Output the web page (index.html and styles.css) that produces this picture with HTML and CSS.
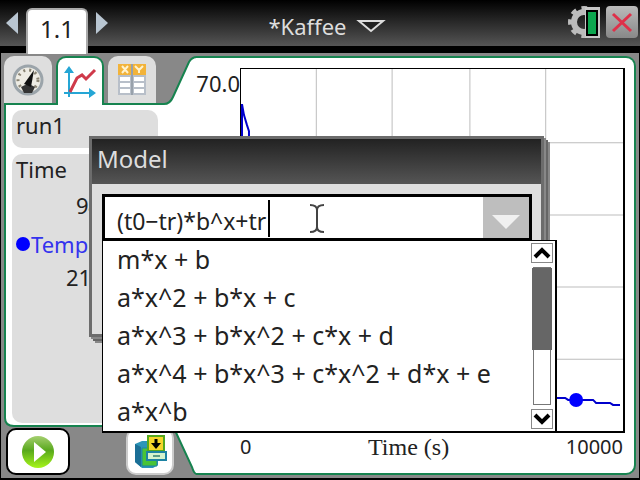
FILE: index.html
```html
<!DOCTYPE html>
<html lang="de">
<head>
<meta charset="utf-8">
<title>Kaffee</title>
<link rel="stylesheet" href="styles.css">
</head>
<body>

<header class="topbar">
  <nav class="pages">
    <button class="arrow" aria-label="Previous page">
      <svg width="12" height="22" viewBox="0 0 12 22"><path d="M12 0V22L0 11Z" fill="#b9c6d2"/></svg>
    </button>
    <a class="page-tab" href="#">1.1</a>
    <button class="arrow" aria-label="Next page">
      <svg width="12" height="22" viewBox="0 0 12 22"><path d="M0 0V22L12 11Z" fill="#b9c6d2"/></svg>
    </button>
  </nav>
  <button class="doc">*Kaffee
    <svg width="30" height="16" viewBox="0 0 30 16"><path d="M3 3H27L15 13Z" fill="#222" stroke="#ddd" stroke-width="2"/></svg>
  </button>
  <div class="status">
    <button aria-label="Settings">
      <svg width="32" height="32" viewBox="0 0 32 32">
        <circle cx="16" cy="16" r="10" fill="none" stroke="#bcbcbc" stroke-width="6"/>
        <circle cx="16" cy="16" r="14" fill="none" stroke="#bcbcbc" stroke-width="4" stroke-dasharray="5.5 5.5" stroke-dashoffset="3"/>
        <path d="M17 1H32V32H17Z" fill="#c8c8c8"/>
        <path d="M19 5H29V29H19Z" fill="#0ca64f" stroke="#000" stroke-width="2"/>
      </svg>
    </button>
    <button class="close" aria-label="Close">
      <svg width="32" height="32" viewBox="0 0 32 32"><path d="M7 8L25 25M25 8L7 25" stroke="#df3049" stroke-width="3"/></svg>
    </button>
  </div>
</header>

<main class="workspace">
  <svg class="outline" viewBox="0 0 196 425" preserveAspectRatio="none">
    <path d="M196 4Q191 4 188 9L172 44Q169 51 163 51H4V365Q4 373 13 373H172L191 414Q193 421 196 421Z" fill="#fff" stroke="#16834f" stroke-width="2"/>
  </svg>

  <aside class="sidebar">
    <div class="tabs">
      <button class="tab" aria-label="Meter">
        <svg width="34" height="34" viewBox="0 0 34 34">
          <circle cx="17" cy="17" r="14" fill="#eeece4" stroke="#9ba4aa" stroke-width="3"/>
          <circle cx="17" cy="17" r="10" fill="none" stroke="#8a8474" stroke-width="3" stroke-dasharray="2 4"/>
          <path d="M10 24Q17 19 24 24L21 30H13Z" fill="#333"/>
          <path d="M23 7L13 21L20 24Z" fill="#111"/>
        </svg>
      </button>
      <button class="tab active" aria-label="Graph">
        <svg width="34" height="34" viewBox="0 0 34 34">
          <path d="M6 32V5M1 28H28" stroke="#25a6d5" stroke-width="2"/>
          <path d="M1 8L6 1L11 8ZM26 23L33 28L26 33Z" fill="#25a6d5"/>
          <path d="M7 27L14 13L19 10L23 14L32 5" fill="none" stroke="#cf3a4a" stroke-width="3"/>
        </svg>
      </button>
      <button class="tab" aria-label="Table">
        <svg width="30" height="34" viewBox="0 0 30 34">
          <path d="M1 1H29V32H1Z" fill="#b8bfc9"/>
          <path d="M1 1H29V12H1Z" fill="#f2b33a"/>
          <path d="M3 14H13V18H3ZM3 20H13V24H3ZM3 26H13V30H3ZM17 14H27V18H17ZM17 20H27V24H17ZM17 26H27V30H17Z" fill="#fff"/>
          <path d="M5 3L11 10M11 3L5 10M18 3L22 7L26 3M22 7V10" stroke="#fff3cf" stroke-width="2" fill="none"/>
          <path d="M15 1V32" stroke="#98a1ab" stroke-width="2"/>
        </svg>
      </button>
    </div>
    <div class="panel">
      <div class="card run">run1</div>
      <dl class="card values">
        <dt>Time</dt>
        <dd>94.0</dd>
        <dt class="series">Temp</dt>
        <dd>21.5</dd>
      </dl>
    </div>
    <div class="actions">
      <button class="start" aria-label="Start">
        <svg width="34" height="34" viewBox="0 0 34 34">
          <defs><linearGradient id="green" x2="0" y2="1"><stop offset="0" stop-color="#a5cf70"/><stop offset=".45" stop-color="#58a81c"/><stop offset="1" stop-color="#a6f51b"/></linearGradient></defs>
          <circle cx="17" cy="17" r="16" fill="url(#green)"/>
          <path d="M13 7V27L25 17Z" fill="#fff"/>
        </svg>
      </button>
      <button class="store" aria-label="Store data">
        <svg width="34" height="34" viewBox="0 0 34 34">
          <path d="M2 9L9 6H25V30L20 33H9L2 27Z" fill="#2c95b8"/>
          <path d="M2 9L8 12V32L2 27Z" fill="#1b6f96"/>
          <path d="M9 13H24V31H9Z" fill="#49c437" stroke="#1d83a3"/>
          <path d="M15 1H31V16H15Z" fill="#f5d52a" stroke="#55a81d" stroke-width="2"/>
          <path d="M23 4V10" stroke="#000" stroke-width="3"/><path d="M18 8H28L23 14Z"/>
          <path d="M14 17H33V25H14Z" fill="#d5f3cd" stroke="#1d83a3" stroke-width="2"/>
          <path d="M20 21H27" stroke="#5b9c86" stroke-width="2"/>
        </svg>
      </button>
    </div>
  </aside>

  <section class="graph">
    <div class="y-max">70.0</div>
    <svg class="plot" viewBox="0 0 383 361" preserveAspectRatio="none">
      <path d="M75.5 0V361M151.5 0V361M229.5 0V361M305.5 0V361M0 73.5H383M0 145.5H383M0 217.5H383M0 289.5H383" stroke="#bdbdbd"/>
      <path d="M1 361V35L3 46L6 56L8 62V68L14 90L45 180L110 260L200 305L270 322L317 328H325L328 330H353L356 333H370L373 335H380" fill="none" stroke="#00c" stroke-width="2"/>
      <circle cx="336" cy="330" r="7" fill="#00f"/>
    </svg>
    <div class="x-axis"><span>0</span><span class="x-name">Time (s)</span><span>10000</span></div>
  </section>

  <div class="dialog" role="dialog" aria-labelledby="dialog-title">
    <h1 id="dialog-title">Model</h1>
    <div class="combo">
      <input type="text" aria-label="Model" value="(t0−tr)*b^x+tr">
      <span class="caret"></span>
      <svg class="pointer" width="16" height="29" viewBox="0 0 16 29"><path d="M1 1Q8 1 8 6V23Q8 28 1 28M15 1Q8 1 8 6M8 23Q8 28 15 28" fill="none" stroke="#444" stroke-width="2"/></svg>
      <button class="open" aria-label="Show models">
        <svg width="30" height="16" viewBox="0 0 30 16"><path d="M1 1H29L15 15Z" fill="#f0f0f0"/></svg>
      </button>
      <div class="menu">
        <ul>
          <li><button>m*x + b</button></li>
          <li><button>a*x^2 + b*x + c</button></li>
          <li><button>a*x^3 + b*x^2 + c*x + d</button></li>
          <li><button>a*x^4 + b*x^3 + c*x^2 + d*x + e</button></li>
          <li><button>a*x^b</button></li>
        </ul>
        <div class="scroll">
          <button aria-label="Scroll up"><svg width="18" height="14" viewBox="0 0 18 14"><path d="M2 11L9 4L16 11" fill="none" stroke="#000" stroke-width="4"/></svg></button>
          <div class="track"><div class="thumb"></div></div>
          <button aria-label="Scroll down"><svg width="18" height="14" viewBox="0 0 18 14"><path d="M2 3L9 10L16 3" fill="none" stroke="#000" stroke-width="4"/></svg></button>
        </div>
      </div>
    </div>
  </div>
</main>

</body>
</html>
```
FILE: styles.css
```css
* {
  box-sizing: border-box;
  }
body {
  margin: 0;
  min-height: 100vh;
  display: flex;
  flex-direction: column;
  background: #000;
  color: #222;
  font-family: "Noto Sans", sans-serif;
  font-size: 22px;
  line-height: 30px;
  }
button {
  margin: 0;
  padding: 0;
  border: 0;
  background: none;
  color: inherit;
  font: inherit;
  }
svg {
  display: block;
  }

/* top bar */
.topbar {
  display: grid;
  grid-template-columns: 1fr auto 1fr;
  height: 53px;
  padding-left: 6px;
  border-bottom: 7px solid #000;
  background: linear-gradient(#000, #555);
  }
.pages {
  display: flex;
  align-items: flex-start;
  gap: 8px;
  }
.arrow {
  margin-top: 12px;
  }
.page-tab {
  position: relative;
  z-index: 1;
  width: 62px;
  height: 46px;
  margin-top: 8px;
  border: 2px solid #aaa;
  border-bottom: 0;
  border-radius: 6px 6px 0 0;
  background: #fff;
  color: #222;
  font-size: 24px;
  line-height: 38px;
  text-align: center;
  text-decoration: none;
  }
.doc {
  display: flex;
  align-items: center;
  gap: 9px;
  height: 52px;
  padding-left: 8px;
  color: #ddd;
  }
.status {
  display: flex;
  justify-content: flex-end;
  align-items: flex-start;
  gap: 6px;
  padding: 6px 2px;
  }
.close {
  border-radius: 4px;
  background: linear-gradient(#bbb, #888);
  }

/* workspace */
.workspace {
  position: relative;
  flex: 1;
  display: grid;
  grid-template-columns: 195px 1fr;
  border: 1px solid #000;
  border-width: 0 1px 2px;
  background: #888;
  }
.outline {
  position: absolute;
  width: 196px;
  height: 100%;
  }
.sidebar {
  position: relative;
  display: flex;
  flex-direction: column;
  }
.tabs {
  display: flex;
  gap: 4px;
  height: 52px;
  padding: 3px 0 0 3px;
  }
.tab {
  display: flex;
  align-items: center;
  justify-content: center;
  width: 48px;
  height: 47px;
  border-radius: 10px 10px 0 0;
  background: #dedede;
  }
.tab.active {
  height: 49px;
  border: 2px solid #16834f;
  border-bottom: 0;
  background: #fff;
  }
.panel {
  flex: 1;
  display: flex;
  flex-direction: column;
  gap: 6px;
  padding: 5px 38px 5px 11px;
  }
.card {
  margin: 0;
  padding: 0 4px;
  border-radius: 10px;
  background: #dedede;
  }
.run {
  height: 38px;
  }
.values {
  flex: 1;
  }
.values dt, .values dd {
  height: 36px;
  margin: 0;
  }
.values dd {
  padding-left: 60px;
  }
.values dd:last-child {
  padding-left: 50px;
  }
.series {
  display: flex;
  align-items: center;
  gap: 1px;
  color: #33e;
  }
.series::before {
  content: "";
  width: 14px;
  height: 14px;
  border-radius: 50%;
  background: #00f;
  }
.actions {
  display: flex;
  justify-content: space-between;
  height: 50px;
  padding: 0 22px 3px 5px;
  }
.start, .store {
  display: flex;
  align-items: center;
  justify-content: center;
  border-radius: 10px;
  background: #fff;
  }
.start {
  width: 64px;
  border: 2px solid #000;
  }
.store {
  width: 48px;
  border: 2px solid #ccc;
  }

/* graph */
.graph {
  position: relative;
  display: grid;
  grid-template-columns: 44px 1fr;
  grid-template-rows: 1fr 40px;
  margin: 3px 3px 3px 0;
  padding: 10px 9px 0 0;
  border: 2px solid #16834f;
  border-left: 0;
  border-radius: 0 10px 10px 0;
  background: #fff;
  }
.y-max {
  text-align: right;
  }
.plot {
  width: 100%;
  height: 100%;
  min-height: 0;
  border: 1px solid #000;
  border-width: 1px 2px 2px 1px;
  }
.x-axis {
  grid-column: 2;
  display: flex;
  justify-content: space-between;
  padding-right: 2px;
  font-size: 20px;
  line-height: 28px;
  }
.x-name {
  font-family: "Liberation Serif", serif;
  font-size: 24px;
  }

/* dialog */
.dialog {
  position: absolute;
  top: 83px;
  left: 50%;
  width: 455px;
  height: 201px;
  margin-left: -231px;
  border: 3px solid #6c6c6c;
  background: #dedede;
  box-shadow: 2px 2px #888, 4px 4px #666, 6px 6px #888;
  }
.dialog h1 {
  height: 45px;
  margin: 0 0 10px;
  padding: 5px;
  background: linear-gradient(#222, #555);
  color: #ddd;
  font-size: 24px;
  font-weight: normal;
  }
.combo {
  position: relative;
  display: flex;
  height: 47px;
  margin: 0 9px 0 10px;
  border: 3px solid #000;
  background: #fff;
  }
.combo input {
  flex: 1;
  min-width: 0;
  padding: 6px 0 0 12px;
  border: 0;
  outline: 0;
  background: none;
  color: inherit;
  font: inherit;
  font-size: 23px;
  }
.open {
  display: flex;
  align-items: center;
  justify-content: center;
  width: 46px;
  padding-top: 8px;
  background: #bebebe;
  }
.caret {
  position: absolute;
  top: 3px;
  left: 163px;
  width: 2px;
  height: 37px;
  background: #000;
  }
.pointer {
  position: absolute;
  top: 7px;
  left: 204px;
  }
.menu {
  position: absolute;
  top: 43px;
  left: -3px;
  display: flex;
  width: 455px;
  padding-right: 2px;
  border: 1px solid #000;
  border-width: 1px 2px 2px 1px;
  background: #fff;
  font-size: 25px;
  }
.menu ul {
  flex: 1;
  margin: 0;
  padding: 0;
  list-style: none;
  }
.menu li button {
  display: block;
  width: 100%;
  height: 38px;
  padding: 0 0 2px 14px;
  text-align: left;
  }
.scroll {
  display: flex;
  flex-direction: column;
  gap: 4px;
  width: 22px;
  padding: 2px 0;
  }
.scroll button {
  display: flex;
  align-items: center;
  justify-content: center;
  height: 20px;
  border: 1px solid #888;
  }
.track {
  flex: 1;
  margin: 0 2px;
  border: 1px solid #777;
  }
.thumb {
  height: 60%;
  margin: 0 -2px;
  background: #666;
  }
```
